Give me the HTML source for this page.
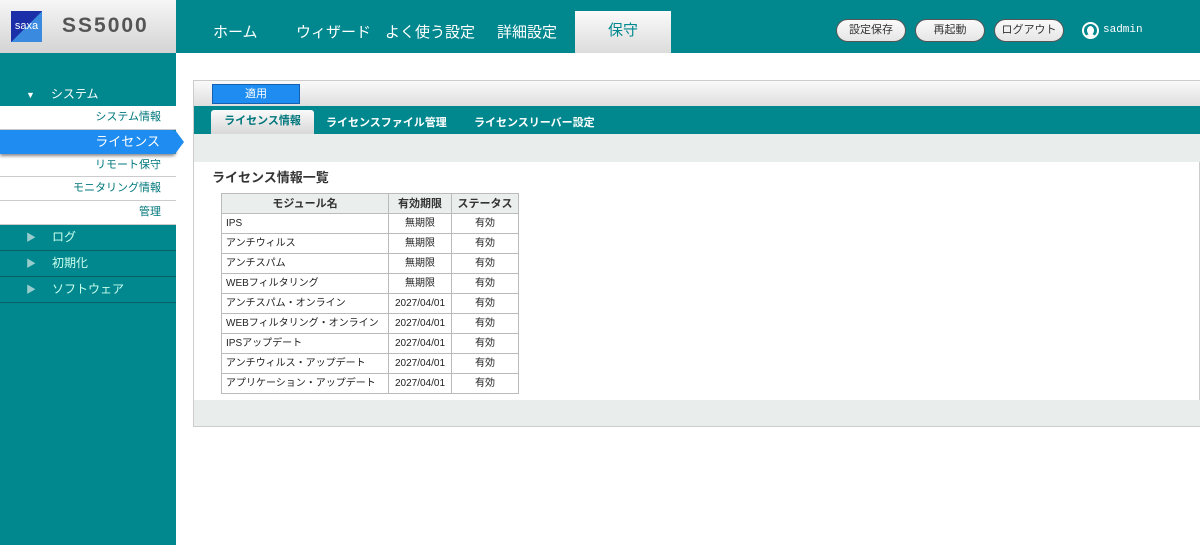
<!DOCTYPE html>
<html><head><meta charset="utf-8">
<style>
*{margin:0;padding:0;box-sizing:border-box}
body{width:1200px;height:545px;position:relative;overflow:hidden;background:#fff;font-family:"Liberation Sans","Noto Sans CJK JP",sans-serif;font-size:12px;color:#222}
.a{position:absolute}
.teal{background:#00888e}
.nav{color:#fff;font-size:15px;top:21px}
.btn{top:19px;height:23px;border-radius:12px;background:linear-gradient(#fafafa,#e6e6e6);border:1px solid #555;font-size:11px;text-align:center;line-height:21px;color:#333}
.si{left:0;width:176px;height:24px;background:#fff;border-bottom:1px solid #ccc;text-align:right;padding-right:15px;line-height:23px;color:#00777c;font-size:11px}
.st{left:0;width:176px;height:26px;border-bottom:1px solid #0a5f63;color:#cfe;line-height:25px;padding-left:26px;font-size:12px}
.st b{color:#9cc;font-weight:normal;margin-right:16px;font-size:10px}
table{border-collapse:collapse;font-size:10px;table-layout:fixed;width:297px}
td,th{border:1px solid #bbb;height:20px;padding:0 4px;white-space:nowrap;overflow:hidden;line-height:18px}
th{background:#eaeeec;font-weight:bold;color:#333;font-size:11px}
td.c{text-align:center}
</style></head><body>
<div class="a" style="left:0;top:0;width:176px;height:53px;background:linear-gradient(#f6f6f6,#d4d4d4)"></div>
<div class="a" style="left:11px;top:11px;width:31px;height:31px;background:linear-gradient(135deg,#1a2fa8 50%,#3a8be0 50%);color:#fff;font-size:11px;line-height:31px;text-align:center">saxa</div>
<div class="a" style="left:62px;top:14px;font-size:21px;font-weight:bold;color:#555;letter-spacing:2px">SS5000</div>
<div class="a teal" style="left:176px;top:0;width:1024px;height:53px"></div>
<div class="a nav" style="left:213px">ホーム</div>
<div class="a nav" style="left:296px">ウィザード</div>
<div class="a nav" style="left:385px">よく使う設定</div>
<div class="a nav" style="left:497px">詳細設定</div>
<div class="a" style="left:575px;top:11px;width:96px;height:42px;background:linear-gradient(#fafafa,#dcdcdc);color:#00888e;font-size:15px;text-align:center;line-height:40px">保守</div>
<div class="a btn" style="left:836px;width:70px">設定保存</div>
<div class="a btn" style="left:915px;width:70px">再起動</div>
<div class="a btn" style="left:994px;width:70px">ログアウト</div>
<div class="a" style="left:1082px;top:22px;width:17px;height:17px;border-radius:50%;border:2px solid #fff;overflow:hidden"><div style="position:absolute;left:3px;top:2px;width:7px;height:9px;border-radius:50%;background:#fff"></div><div style="position:absolute;left:1px;top:10px;width:11px;height:8px;border-radius:50% 50% 0 0;background:#fff"></div></div>
<div class="a" style="left:1103px;top:24px;color:#fff;font-size:11px;font-family:'Liberation Mono',monospace">sadmin</div>

<div class="a teal" style="left:0;top:53px;width:176px;height:492px"></div>
<div class="a" style="left:26px;top:85px;color:#fff;font-size:12px"><span style="font-size:9px;margin-right:16px">▼</span>システム</div>
<div class="a si" style="top:106px">システム情報</div>
<div class="a si" style="top:154px;height:23px">リモート保守</div>
<div class="a si" style="top:177px">モニタリング情報</div>
<div class="a si" style="top:201px">管理</div>
<div class="a" style="left:0;top:130px;width:176px;height:24px;background:#1e8cf0;border-radius:0 4px 4px 0;color:#fff;text-align:right;padding-right:16px;line-height:24px;font-size:13px;box-shadow:0 2px 3px #888">ライセンス</div>
<div class="a" style="left:175px;top:130px;width:0;height:0;border-top:12px solid transparent;border-bottom:12px solid transparent;border-left:9px solid #1e8cf0"></div>
<div class="a st" style="top:225px"><b>▶</b>ログ</div>
<div class="a st" style="top:251px"><b>▶</b>初期化</div>
<div class="a st" style="top:277px"><b>▶</b>ソフトウェア</div>

<div class="a" style="left:193px;top:80px;width:1007px;height:347px;border:1px solid #ccc;background:#fff"></div>
<div class="a" style="left:194px;top:81px;width:1006px;height:25px;background:linear-gradient(#fafafa,#dedede)"></div>
<div class="a" style="left:212px;top:84px;width:88px;height:20px;background:#1e8cf0;border:1px solid #1560b0;color:#fff;text-align:center;line-height:18px;font-size:11px">適用</div>
<div class="a teal" style="left:194px;top:106px;width:1006px;height:28px"></div>
<div class="a" style="left:211px;top:110px;width:103px;height:24px;background:linear-gradient(#fafafa,#d8d8d8);border-radius:3px 3px 0 0;color:#00777c;font-weight:bold;text-align:center;line-height:23px;font-size:11px">ライセンス情報</div>
<div class="a" style="left:326px;top:114px;color:#fff;font-weight:bold;font-size:11px">ライセンスファイル管理</div>
<div class="a" style="left:474px;top:114px;color:#fff;font-weight:bold;font-size:11px">ライセンスリーバー設定</div>
<div class="a" style="left:194px;top:134px;width:1006px;height:28px;background:#e9eeec"></div>
<div class="a" style="left:212px;top:167px;font-size:13px;font-weight:bold;color:#333">ライセンス情報一覧</div>
<div class="a" style="left:221px;top:193px">
<table>
<colgroup><col style="width:167px"><col style="width:63px"><col style="width:67px"></colgroup>
<tr><th>モジュール名</th><th>有効期限</th><th>ステータス</th></tr>
<tr><td>IPS</td><td class="c">無期限</td><td class="c">有効</td></tr>
<tr><td>アンチウィルス</td><td class="c">無期限</td><td class="c">有効</td></tr>
<tr><td>アンチスパム</td><td class="c">無期限</td><td class="c">有効</td></tr>
<tr><td>WEBフィルタリング</td><td class="c">無期限</td><td class="c">有効</td></tr>
<tr><td>アンチスパム・オンライン</td><td class="c">2027/04/01</td><td class="c">有効</td></tr>
<tr><td>WEBフィルタリング・オンライン</td><td class="c">2027/04/01</td><td class="c">有効</td></tr>
<tr><td>IPSアップデート</td><td class="c">2027/04/01</td><td class="c">有効</td></tr>
<tr><td>アンチウィルス・アップデート</td><td class="c">2027/04/01</td><td class="c">有効</td></tr>
<tr><td>アプリケーション・アップデート</td><td class="c">2027/04/01</td><td class="c">有効</td></tr>
</table></div>
<div class="a" style="left:194px;top:400px;width:1006px;height:26px;background:#e9eeec"></div>
</body></html>
